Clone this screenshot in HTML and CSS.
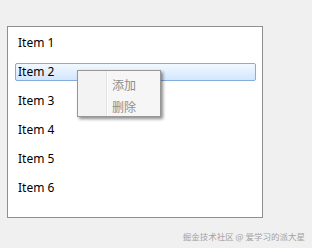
FILE: index.html
```html
<!DOCTYPE html>
<html>
<head>
<meta charset="utf-8">
<link rel="stylesheet" href="styles.css">
</head>
<body>
<div class="page">
  <div class="listbox">
    <div class="item">Item 1</div>
    <div class="item selected">Item 2</div>
    <div class="item">Item 3</div>
    <div class="item">Item 4</div>
    <div class="item">Item 5</div>
    <div class="item">Item 6</div>
  </div>
  <div class="menu">
    <div class="menu-item">添加</div>
    <div class="menu-item">删除</div>
  </div>
  <div class="watermark">掘金技术社区 @ 爱学习的派大星</div>
</div>
</body>
</html>
```
FILE: styles.css
```css
html, body {
  margin: 0;
  padding: 0;
  background: #f0f0f0;
}
.page {
  position: relative;
  width: 312px;
  height: 248px;
  padding: 26px 0 0 7px;
  box-sizing: border-box;
  font-family: "Noto Sans", "Noto Sans CJK SC", sans-serif;
}
.listbox {
  width: 256px;
  height: 192px;
  box-sizing: border-box;
  background: #fff;
  border: 1px solid #8e8f8f;
  padding: 7px 6px 0 7px;
  display: flex;
  flex-direction: column;
  gap: 11px;
}
.item {
  height: 18px;
  line-height: 16px;
  padding-left: 2px;
  border: 1px solid transparent;
  box-sizing: border-box;
  font-size: 12px;
  color: #000;
}
.item.selected {
  border-color: #84acdd;
  border-radius: 2px;
  background: linear-gradient(#f2f8ff, #d3e6fd);
}
.menu {
  position: absolute;
  left: 77px;
  top: 70px;
  width: 84px;
  height: 47px;
  box-sizing: border-box;
  border: 1px solid #979797;
  background: linear-gradient(to right, #f3f3f3 28px, #e2e3e3 28px, #e2e3e3 29px, #ffffff 29px, #ffffff 30px, #f6f6f6 30px);
  box-shadow: 2px 2px 3px rgba(0, 0, 0, 0.45);
  padding-top: 3px;
  display: flex;
  flex-direction: column;
}
.menu-item {
  height: 22px;
  line-height: 22px;
  padding-left: 34px;
  font-size: 12px;
  color: #8d8d8d;
  font-family: "Noto Sans CJK SC", sans-serif;
}
.watermark {
  position: absolute;
  right: 7px;
  top: 229px;
  font-size: 8.5px;
  line-height: 14px;
  color: #a3a3a3;
  font-family: "Noto Sans CJK SC", sans-serif;
}
```
